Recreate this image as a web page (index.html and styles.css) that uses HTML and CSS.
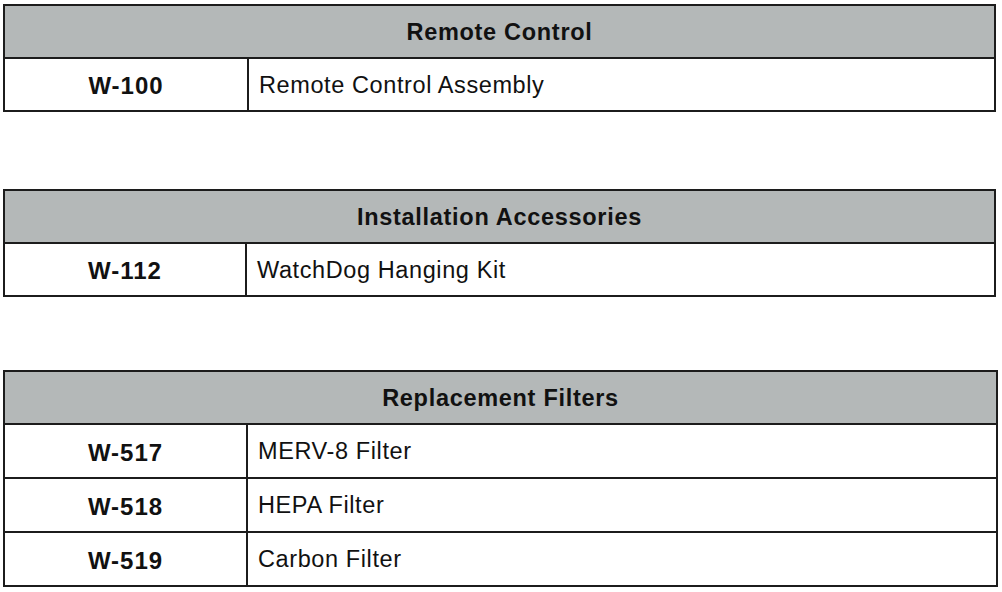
FILE: index.html
```html
<!DOCTYPE html>
<html>
<head>
<meta charset="utf-8">
<link rel="stylesheet" href="styles.css">
</head>
<body>
<div class="page">
  <table class="parts">
    <colgroup><col class="c-code"><col></colgroup>
    <thead><tr class="head"><th colspan="2">Remote Control</th></tr></thead>
    <tbody>
      <tr class="row"><td class="code">W-100</td><td class="desc">Remote Control Assembly</td></tr>
    </tbody>
  </table>
  <table class="parts t2">
    <colgroup><col class="c-code2"><col></colgroup>
    <thead><tr class="head"><th colspan="2">Installation Accessories</th></tr></thead>
    <tbody>
      <tr class="row"><td class="code">W-112</td><td class="desc">WatchDog Hanging Kit</td></tr>
    </tbody>
  </table>
  <table class="parts t3">
    <colgroup><col class="c-code3"><col></colgroup>
    <thead><tr class="head"><th colspan="2">Replacement Filters</th></tr></thead>
    <tbody>
      <tr class="row tall"><td class="code">W-517</td><td class="desc">MERV-8 Filter</td></tr>
      <tr class="row tall"><td class="code">W-518</td><td class="desc">HEPA Filter</td></tr>
      <tr class="row tall"><td class="code">W-519</td><td class="desc">Carbon Filter</td></tr>
    </tbody>
  </table>
</div>
</body>
</html>
```
FILE: styles.css
```css
html, body {
  margin: 0;
  padding: 0;
  background: #ffffff;
}
.page {
  display: flex;
  flex-direction: column;
  align-items: flex-start;
  gap: 77px;
  padding: 4px 0 0 3px;
  font-family: "Liberation Sans", Arial, Helvetica, sans-serif;
  color: #111;
}
.parts {
  border-collapse: collapse;
  table-layout: fixed;
  width: 993px;
  border: 2px solid #1c1c1c;
}
.parts.t3 {
  width: 995px;
  margin-top: -4px;
}
.c-code { width: 244px; }
.c-code2 { width: 242px; }
.c-code3 { width: 243px; }
.head { height: 53px; }
.row { height: 53px; }
.row.tall { height: 54px; }
.parts th {
  background: #b4b8b8;
  padding: 0;
  font-size: 23.5px;
  line-height: 26px;
  letter-spacing: 0.7px;
  font-weight: bold;
  text-align: center;
  vertical-align: middle;
  border-bottom: 2px solid #1c1c1c;
}
.parts td {
  padding: 0;
  font-size: 23.5px;
  line-height: 26px;
  letter-spacing: 0.6px;
  vertical-align: middle;
  border-top: 2px solid #1c1c1c;
}
.parts td.code {
  font-weight: bold;
  font-size: 24px;
  letter-spacing: 1px;
  text-align: center;
  border-right: 2px solid #1c1c1c;
  padding-top: 3px;
}
.parts td.desc {
  padding-left: 10px;
}
```
